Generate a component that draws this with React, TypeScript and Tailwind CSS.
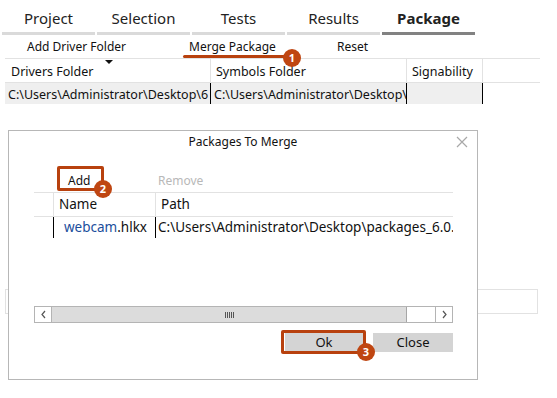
import React from "react";

const orange = "#b8410e";

function Badge({ n, className }: { n: string; className: string }) {
  return (
    <div
      className={`absolute w-[18px] h-[18px] rounded-full bg-[#bf4612] text-white text-[11px] font-bold leading-[18px] text-center ${className}`}
    >
      {n}
    </div>
  );
}

function Tabs() {
  const tabs = ["Project", "Selection", "Tests", "Results", "Package"];
  return (
    <div className="flex pl-[2px] gap-[2px] h-[35px]">
      {tabs.map((t) => {
        const active = t === "Package";
        return (
          <div key={t} className="w-[93px] flex flex-col">
            <div
              className={`h-[32px] pt-[5px] flex items-center justify-center text-[15px] text-[#222] ${
                active ? "font-bold" : ""
              }`}
            >
              {t}
            </div>
            <div className={`h-[3px] ${active ? "bg-[#828282]" : "bg-[#dadada]"}`} />
          </div>
        );
      })}
    </div>
  );
}

function MainTable() {
  return (
    <div className="ml-[5px] w-[535px] text-[12.5px] text-[#111]">
      <div className="flex h-[25px] border-t border-[#e2e2e2] border-b">
        <div className="w-[206px] pl-[6px] pt-[3px] flex items-center border-r border-[#e2e2e2]">Drivers Folder</div>
        <div className="w-[196px] pl-[5px] pt-[3px] flex items-center border-r border-[#e2e2e2]">Symbols Folder</div>
        <div className="w-[76px] pl-[5px] pt-[3px] flex items-center border-r border-[#e2e2e2]">Signability</div>
        <div className="flex-1" />
      </div>
      <div className="flex h-[21px]">
        <div className="w-[206px] pl-[3px] pt-[3px] flex items-center bg-[#efefef] border-r border-black overflow-hidden whitespace-nowrap">
          C:\Users\Administrator\Desktop\6
        </div>
        <div className="w-[196px] pl-[3px] pt-[3px] flex items-center bg-[#efefef] border-r border-black overflow-hidden whitespace-nowrap">
          C:\Users\Administrator\Desktop\
        </div>
        <div className="w-[76px] bg-[#efefef] border-r border-black" />
      </div>
    </div>
  );
}

function Dialog() {
  return (
    <div className="absolute left-[8px] top-[130px] w-[470px] h-[250px] border border-[#b7b7b7] bg-white text-[#111]">
      <div className="relative h-[22px] flex items-center justify-center text-[12px]">
        Packages To Merge
        <svg className="absolute right-[9px] top-[5px]" width="12" height="12" viewBox="0 0 12 12">
          <path d="M1 1 L11 11 M11 1 L1 11" stroke="#a8a8a8" strokeWidth="1.2" />
        </svg>
      </div>
      <div className="relative h-[39px] pt-[19px] flex text-[12px]">
        <div className="ml-[59px] w-[90px]">Add</div>
        <div className="text-[#b8b8b8]">Remove</div>
        <div
          className="absolute left-[48px] top-[13px] w-[47px] h-[25px] border-[3px] rounded-[2px]"
          style={{ borderColor: orange }}
        />
        <Badge n="2" className="left-[85px] top-[27px]" />
      </div>
      <div className="ml-[25px] w-[419px] text-[13.5px]">
        <div className="flex h-[25px] border-t border-b border-[#e2e2e2]">
          <div className="w-[20px] border-r border-[#e2e2e2]" />
          <div className="w-[102px] pl-[5px] flex items-center border-r border-[#e2e2e2]">Name</div>
          <div className="flex-1 pl-[5px] flex items-center">Path</div>
        </div>
        <div className="flex h-[21px]">
          <div className="w-[20px] border-r border-black" />
          <div className="w-[102px] pl-[10px] flex items-center border-r border-black">
            <span className="text-[#1b4e9c]">webcam</span>.hlkx
          </div>
          <div className="flex-1 pl-[2px] flex items-center overflow-hidden whitespace-nowrap">
            C:\Users\Administrator\Desktop\packages_6.0.69.0
          </div>
        </div>
        <div className="h-[68px]" />
        <div className="flex h-[17px] border border-[#b4b4b4]">
          <div className="w-[17px] flex items-center justify-center border-r border-[#b4b4b4]">
            <svg width="7" height="9" viewBox="0 0 7 9">
              <path d="M5 1 L2 4.5 L5 8" stroke="#555" strokeWidth="1.2" fill="none" />
            </svg>
          </div>
          <div className="w-[355px] bg-[#dcdcdc] border-r border-[#a6a6a6] flex items-center justify-center">
            <svg width="9" height="6" viewBox="0 0 9 6">
              <path d="M0.5 0 V6 M2.5 0 V6 M4.5 0 V6 M6.5 0 V6 M8.5 0 V6" stroke="#555" strokeWidth="1" />
            </svg>
          </div>
          <div className="flex-1" />
          <div className="w-[17px] flex items-center justify-center border-l border-[#b4b4b4]">
            <svg width="7" height="9" viewBox="0 0 7 9">
              <path d="M2 1 L5 4.5 L2 8" stroke="#555" strokeWidth="1.2" fill="none" />
            </svg>
          </div>
        </div>
        <div className="relative flex justify-end gap-[10px] mt-[10px] text-[13px]">
          <div className="w-[78px] h-[19px] bg-[#d4d4d4] flex items-center justify-center">Ok</div>
          <div className="w-[80px] h-[19px] bg-[#d4d4d4] flex items-center justify-center">Close</div>
          <div
            className="absolute left-[247px] top-[-3px] w-[85px] h-[24px] border-[3px] rounded-[2px]"
            style={{ borderColor: orange }}
          />
          <Badge n="3" className="left-[323px] top-[10px]" />
        </div>
      </div>
    </div>
  );
}

export default function App() {
  return (
    <div className="relative w-[557px] h-[398px] bg-white overflow-hidden font-['Noto_Sans',sans-serif] text-[#111]">
      <Tabs />
      <div className="relative flex h-[23px] items-center text-[12px]">
        <div className="ml-[27px] w-[162px]">Add Driver Folder</div>
        <div className="w-[148px]">Merge Package</div>
        <div>Reset</div>
        <div className="absolute left-[183px] top-[20px] w-[108px] h-[3px] rounded-full" style={{ backgroundColor: orange }} />
        <Badge n="1" className="left-[283px] top-[14px]" />
        <svg className="absolute left-[105px] top-[25px]" width="8" height="4" viewBox="0 0 8 4">
          <path d="M0 0 H8 L4 4 Z" fill="#111" />
        </svg>
      </div>
      <MainTable />
      <div className="ml-[5px] mt-[185px] w-[533px] h-[25px] border border-[#e2e2e2]" />
      <Dialog />
    </div>
  );
}
